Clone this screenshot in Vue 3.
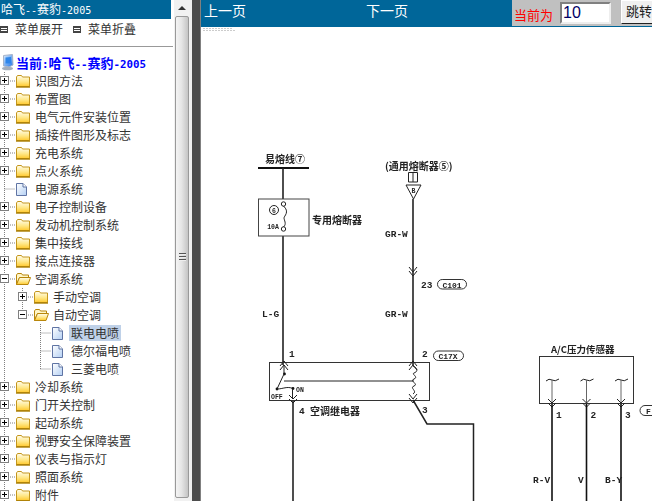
<template>
  <div class="page">
    <aside class="side">
      <div class="side-title">哈飞<span class="ascii">--</span>赛豹<span class="ascii">-2005</span></div>
      <div class="menu-bar">
        <span class="menu-action"><i class="menu-icon"></i>菜单展开</span>
        <span class="menu-action"><i class="menu-icon"></i>菜单折叠</span>
      </div>
      <div class="current">
        <svg class="pc-icon" width="14" height="17" viewBox="0 0 14 17">
          <defs>
            <linearGradient id="screenFill" x1="0" y1="0" x2="1" y2="1">
              <stop offset="0" stop-color="#d8ecff" />
              <stop offset="1" stop-color="#1f74e6" />
            </linearGradient>
          </defs>
          <path d="M2.5 1.5 L11.5 0.5 L12 11 L8 13 L2.5 12 Z" fill="url(#screenFill)" stroke="#a8b4c8" />
          <path d="M4.5 3.5 L10 3 V9.5 L4.5 9.5 Z" fill="#2f86ea" />
          <ellipse cx="6.5" cy="14.5" rx="5.5" ry="1.8" fill="#a4aebc" />
        </svg>
        <span>当前<span class="ascii">:</span>哈飞<span class="ascii">--</span>赛豹<span class="ascii">-2005</span></span>
      </div>
      <ul class="tree">
        <li v-for="row in rows" :key="row.label" class="tree-row">
          <svg class="links" :width="row.linkWidth" height="18">
            <path v-for="(d, i) in row.dots" :key="i" :d="d" stroke="#808080" stroke-dasharray="1 1" fill="none" />
            <template v-if="row.kids">
              <rect :x="row.boxX + 0.5" y="4.5" width="8" height="8" fill="#fff" stroke="#808080" />
              <path :d="`M${row.boxX + 2} 8.5h5`" stroke="#000" />
              <path v-if="!row.open" :d="`M${row.boxX + 4.5} 6v5`" stroke="#000" />
            </template>
          </svg>
          <svg v-if="row.kids" class="node-icon" width="16" height="14" viewBox="0 0 16 14">
            <defs>
              <linearGradient id="folderFill" x1="0" y1="0" x2="0" y2="1">
                <stop offset="0" stop-color="#fffdf0" />
                <stop offset="0.55" stop-color="#ffe88a" />
                <stop offset="1" stop-color="#ffc92e" />
              </linearGradient>
            </defs>
            <template v-if="row.open">
              <path d="M1.5 12.5 V3 L2.5 1.5 H6.5 L7.5 3 H13.5 V5.5 H4.5 L1.5 12.5 Z" fill="#fff6c8" stroke="#b8860b" />
              <path d="M1.5 12.5 L4.5 5.5 H15.5 L13 12.5 Z" fill="url(#folderFill)" stroke="#b8860b" />
            </template>
            <template v-else>
              <path d="M1.5 12.5 V3 L2.5 1.5 H6.5 L7.5 3 H14.5 V12.5 Z" fill="url(#folderFill)" stroke="#c4961c" />
              <path d="M1 13H15" stroke="#a87c00" stroke-width="1.4" />
            </template>
          </svg>
          <svg v-else class="node-icon" width="16" height="15" viewBox="0 0 16 15">
            <defs>
              <linearGradient id="pageFill" x1="0" y1="0" x2="1" y2="1">
                <stop offset="0" stop-color="#ffffff" />
                <stop offset="1" stop-color="#b4d0f4" />
              </linearGradient>
            </defs>
            <path d="M1.5 1.5 H8 L11.5 5 V13.5 H1.5 Z" fill="url(#pageFill)" stroke="#5f74a4" />
            <path d="M8 1.5 V5 H11.5" fill="#fff" stroke="#5f74a4" />
          </svg>
          <span class="node-label" :class="{ active: row.active }">{{ row.label }}</span>
        </li>
      </ul>
    </aside>

    <div class="scrollbar">
      <div class="scroll-up"><i></i></div>
      <div class="scroll-thumb"><b></b><b></b><b></b></div>
    </div>
    <div class="splitter"></div>

    <main class="viewer">
      <header class="viewer-bar">
        <div class="pager">
          <span class="pager-link">上一页</span>
          <span class="pager-link">下一页</span>
        </div>
        <form class="jump" @submit.prevent>
          <label class="jump-label">当前为</label>
          <input class="jump-input" value="10" />
          <button class="jump-btn">跳转</button>
        </form>
      </header>
      <svg class="diagram" width="451" height="474" viewBox="201 27 451 474">
        <!-- faint scan header -->
        <path d="M203 28.5h30M203 30.5h33" stroke="#ccc" stroke-dasharray="2 1" />

        <!-- fusible link and dedicated fuse -->
        <text x="285" y="163" class="cn" text-anchor="middle">易熔线⑦</text>
        <path d="M258 168H309" stroke="#111" stroke-width="2" />
        <path d="M283 168V199M283 236V365" stroke="#222" stroke-width="1.6" fill="none" />
        <rect x="258.5" y="199" width="50.5" height="37" fill="none" stroke="#444" />
        <circle cx="283.5" cy="204" r="2.2" fill="#fff" stroke="#222" />
        <circle cx="283.5" cy="229" r="2.2" fill="#fff" stroke="#222" />
        <path d="M283.5 206C290 212 284 216 284 218S287 224 283.5 227" stroke="#222" fill="none" />
        <circle cx="274" cy="210" r="4.5" fill="none" stroke="#222" />
        <text x="274" y="213" class="mini" text-anchor="middle">6</text>
        <text x="273" y="228.5" class="mini" text-anchor="middle">10A</text>
        <text x="312" y="224" class="cn">专用熔断器</text>

        <!-- general fuse branch -->
        <text x="385" y="170" class="cn">(通用熔断器⑤)</text>
        <path d="M408.5 172.5H417.5V182H408.5ZM413 172.5V182" fill="none" stroke="#222" />
        <path d="M406 185H421L413.5 199Z" fill="#fff" stroke="#222" />
        <text x="413.5" y="193" class="mini" text-anchor="middle">B</text>
        <path d="M413 199V365" stroke="#222" stroke-width="1.6" fill="none" />
        <text x="385" y="237" class="lat">GR-W</text>
        <path d="M409 267L413 272L417 267M409 271L413 276L417 271" fill="none" stroke="#222" />
        <text x="421" y="288" class="lat">23</text>
        <rect x="437.5" y="279.5" width="29" height="9.5" rx="4.7" fill="none" stroke="#333" />
        <text x="452" y="287.5" class="pill" text-anchor="middle">C101</text>
        <text x="262" y="317" class="lat">L-G</text>
        <text x="385" y="317" class="lat">GR-W</text>

        <!-- relay -->
        <text x="289" y="357" class="lat">1</text>
        <text x="422" y="357" class="lat">2</text>
        <rect x="433.5" y="351" width="30" height="9.5" rx="4.7" fill="none" stroke="#333" />
        <text x="448" y="359" class="pill" text-anchor="middle">C17X</text>
        <rect x="269.5" y="362.5" width="160" height="38" fill="none" stroke="#333" />
        <path d="M280 366L284 361L288 366M280 370L284 365L288 370" fill="none" stroke="#222" />
        <path d="M409 366L413 361L417 366M409 370L413 365L417 370" fill="none" stroke="#222" />
        <path d="M284 365V374M284 381H414" stroke="#222" fill="none" />
        <circle cx="284.5" cy="374" r="1.4" fill="#111" />
        <path d="M284 374L277 389" stroke="#222" />
        <circle cx="277" cy="389" r="1.4" fill="#111" />
        <path d="M277 389C283 389 287 386 293 388.5" stroke="#222" fill="none" />
        <circle cx="293" cy="388.5" r="1.4" fill="#111" />
        <text x="296" y="392" class="mini">ON</text>
        <text x="271" y="399" class="mini">OFF</text>
        <path d="M413 366C419 369 417 372 414 373S419 377 414 379 419 384 414 386 418 391 413 394" stroke="#222" fill="none" />
        <path d="M292.5 389V398" stroke="#222" />
        <path d="M289 395L293 399L297 395M289 399L293 403L297 399" fill="none" stroke="#222" />
        <path d="M409 394L413 399L417 394M409 398L413 403L417 398" fill="none" stroke="#222" />
        <path d="M293 401V501" stroke="#222" stroke-width="1.6" />
        <path d="M413 400L427 424H473.5V501" stroke="#222" stroke-width="1.5" fill="none" />
        <text x="299" y="414" class="lat">4</text>
        <text x="310" y="415" class="cn">空调继电器</text>
        <text x="422" y="413" class="lat">3</text>

        <!-- A/C pressure sensor -->
        <text x="551" y="353" class="cn-small">A/C压力传感器</text>
        <rect x="539.5" y="356.5" width="94" height="47" fill="none" stroke="#333" />
        <g v-for="wire in sensorWires" :key="wire.x">
          <path :d="`M${wire.x - 6} 381Q${wire.x - 3} 378 ${wire.x} 380T${wire.x + 7} 379`" stroke="#222" fill="none" />
          <path :d="`M${wire.x} 380V403`" stroke="#666" />
          <path :d="`M${wire.x - 4} 399L${wire.x} 403L${wire.x + 4} 399M${wire.x - 4} 403L${wire.x} 407L${wire.x + 4} 403`" fill="none" stroke="#222" />
          <path :d="`M${wire.x} 404V501`" stroke="#111" stroke-width="1.6" />
          <text :x="wire.x + 4" y="418" class="lat">{{ wire.pin }}</text>
        </g>
        <path d="M652 405.5H645A5 5 0 0 0 645 415.5H652" fill="none" stroke="#333" />
        <text x="646" y="414" class="pill">F</text>
        <text x="533" y="483" class="lat">R-V</text>
        <text x="578" y="483" class="lat">V</text>
        <text x="605" y="483" class="lat">B-Y</text>
      </svg>
    </main>
  </div>
</template>

<script setup>
const topBefore = ['识图方法', '布置图', '电气元件安装位置', '插接件图形及标志', '充电系统', '点火系统']
const topAfter = ['电子控制设备', '发动机控制系统', '集中接线', '接点连接器']
const bottom = ['冷却系统', '门开关控制', '起动系统', '视野安全保障装置', '仪表与指示灯', '照面系统', '附件']

// connector lines for one row: trunk at x=4, second level at x=22, third at x=40
const trunk = 'M4.5 0V18'
const closed = (label) => ({
  label,
  kids: true,
  boxX: 0,
  linkWidth: 15,
  dots: [trunk, 'M8 9H15']
})

const rows = [
  ...topBefore.map(closed),
  { label: '电源系统', linkWidth: 15, dots: [trunk, 'M4.5 9H15'] },
  ...topAfter.map(closed),
  { label: '空调系统', kids: true, open: true, boxX: 0, linkWidth: 15, dots: [trunk, 'M8 9H15'] },
  { label: '手动空调', kids: true, boxX: 18, linkWidth: 33, dots: [trunk, 'M22.5 0V18', 'M26 9H33'] },
  { label: '自动空调', kids: true, open: true, boxX: 18, linkWidth: 33, dots: [trunk, 'M22.5 0V9', 'M26 9H33'] },
  { label: '联电电喷', active: true, linkWidth: 51, dots: [trunk, 'M40.5 0V18', 'M40.5 9H51'] },
  { label: '德尔福电喷', linkWidth: 51, dots: [trunk, 'M40.5 0V18', 'M40.5 9H51'] },
  { label: '三菱电喷', linkWidth: 51, dots: [trunk, 'M40.5 0V9', 'M40.5 9H51'] },
  ...bottom.map(closed)
]

const sensorWires = [
  { x: 552, pin: 1 },
  { x: 586.5, pin: 2 },
  { x: 621, pin: 3 }
]
</script>

<style>
html, body {
  margin: 0;
  overflow: hidden;
  background: #fff;
}
</style>

<style scoped>
.page {
  display: flex;
  width: 652px;
  height: 501px;
  overflow: hidden;
  font-family: "Noto Sans CJK SC", "Liberation Sans", sans-serif;
  font-size: 12px;
  color: #333;
}

.ascii {
  font-family: "DejaVu Sans Mono", monospace;
  font-size: 10px;
}

.side {
  width: 174px;
  flex-shrink: 0;
  overflow: hidden;
}

.side-title {
  width: 171px;
  height: 19px;
  line-height: 18px;
  padding-left: 1px;
  box-sizing: border-box;
  background: #006699;
  color: #fff;
  white-space: nowrap;
}

.menu-bar {
  display: flex;
  gap: 10px;
  height: 28px;
  margin-right: 1px;
  align-items: center;
  padding-bottom: 7px;
  box-sizing: border-box;
  border-bottom: 1px solid #999;
  line-height: 20px;
}

.menu-action {
  display: flex;
  align-items: center;
  gap: 7px;
}

.menu-icon {
  width: 8px;
  height: 7px;
  box-sizing: border-box;
  border: 1px solid #444;
  background: repeating-linear-gradient(#444 0 1px, #fff 1px 2px);
}

.current {
  display: flex;
  align-items: center;
  gap: 1px;
  height: 25px;
  padding-top: 6px;
  box-sizing: border-box;
  font-size: 13px;
  font-weight: 700;
  color: #0000ff;
  white-space: nowrap;
}

.current .ascii {
  font-size: 10.8px;
}

.pc-icon {
  flex-shrink: 0;
  margin-left: 1px;
}

.tree {
  list-style: none;
  margin: 0;
  padding: 0;
}

.tree-row {
  display: flex;
  align-items: center;
  height: 18px;
  white-space: nowrap;
}

.links {
  flex-shrink: 0;
}

.node-icon {
  flex-shrink: 0;
}

.node-label {
  margin-left: 2px;
  padding: 0 2px;
  line-height: 16px;
}

.node-label.active {
  background: #bfd1e8;
}

.scrollbar {
  width: 18px;
  flex-shrink: 0;
  background: #f1f1f1;
  display: flex;
  flex-direction: column;
}

.scroll-up {
  height: 16px;
  display: flex;
  align-items: center;
  justify-content: center;
  padding-right: 2px;
}

.scroll-up i {
  border-left: 4px solid transparent;
  border-right: 4px solid transparent;
  border-bottom: 4px solid #333;
}

.scroll-thumb {
  flex: 1;
  box-sizing: border-box;
  margin: 0 3px 3px 1px;
  border: 1px solid #999;
  border-radius: 2px;
  background: linear-gradient(90deg, #f4f4f4, #e6e6e6 45%, #c4c4c4);
  display: flex;
  flex-direction: column;
  align-items: center;
  justify-content: center;
  gap: 1px;
}

.scroll-thumb b {
  width: 7px;
  height: 1px;
  background: #555;
  border-bottom: 1px solid #eee;
}

.splitter {
  width: 8px;
  flex-shrink: 0;
  background: #4d4d4d;
  border-right: 1px solid #808080;
}

.viewer {
  flex: 1;
  min-width: 0;
  display: flex;
  flex-direction: column;
}

.viewer-bar {
  display: flex;
  height: 27px;
  flex-shrink: 0;
  box-sizing: border-box;
  background: #006699;
  overflow: hidden;
}

.pager {
  width: 311px;
  flex-shrink: 0;
  display: flex;
  gap: 120px;
  padding: 1px 0 0 3px;
  box-sizing: border-box;
}

.pager-link {
  color: #fff;
  font-size: 14px;
  line-height: 18px;
}

.jump {
  flex: 1;
  min-width: 0;
  height: 26px;
  margin: 0;
  background: #c0c0c0;
  display: flex;
  align-items: flex-start;
  white-space: nowrap;
  overflow: hidden;
}

.jump-label {
  color: #f00;
  font-size: 13px;
  line-height: 18px;
  margin: 6px 0 0 2px;
}

.jump-input {
  width: 51px;
  height: 22px;
  margin: 2px 0 0 7px;
  padding: 0 0 0 1px;
  box-sizing: border-box;
  border: 2px solid;
  border-color: #808080 #eee #eee #808080;
  background: #fff;
  color: #000066;
  font-family: "Liberation Sans", sans-serif;
  font-size: 16px;
  outline: none;
}

.jump-btn {
  width: 40px;
  height: 24px;
  flex-shrink: 0;
  margin-left: 10px;
  padding: 0 0 3px 4px;
  text-align: left;
  box-sizing: border-box;
  border: 1px solid;
  border-color: #fff #222 #222 #fff;
  background: #f0f0f0;
  color: #222;
  font-family: inherit;
  font-size: 13px;
}

.diagram {
  display: block;
  flex-shrink: 0;
  filter: blur(0.4px);
}

.cn {
  font-family: "Noto Sans CJK SC", sans-serif;
  font-size: 10px;
  font-weight: 700;
  fill: #222;
}

.cn-small {
  font-family: "Noto Sans CJK SC", sans-serif;
  font-size: 9.5px;
  font-weight: 700;
  fill: #222;
}

.lat {
  font-family: "Liberation Mono", monospace;
  font-size: 9.5px;
  font-weight: 700;
  fill: #222;
}

.pill {
  font-family: "Liberation Mono", monospace;
  font-size: 8px;
  font-weight: 700;
  fill: #222;
}

.mini {
  font-family: "Liberation Mono", monospace;
  font-size: 6.5px;
  font-weight: 700;
  fill: #222;
}
</style>
